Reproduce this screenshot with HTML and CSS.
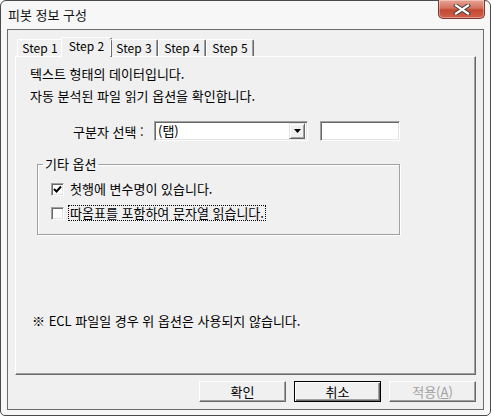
FILE: index.html
```html
<!DOCTYPE html>
<html lang="ko">
<head>
<meta charset="utf-8">
<link rel="stylesheet" href="styles.css">
</head>
<body>
<div class="window">
  <div class="titlebar">
    <span class="title">피봇 정보 구성</span>
    <div class="close">
      <svg width="18" height="11" viewBox="0 0 18 11">
        <path d="M3 1.5 L15 9.5 M15 1.5 L3 9.5" stroke="#3a3a3a" stroke-width="4" stroke-linecap="square"/>
        <path d="M3 1.5 L15 9.5 M15 1.5 L3 9.5" stroke="#ffffff" stroke-width="2.2" stroke-linecap="square"/>
      </svg>
    </div>
  </div>
  <div class="client">
    <div class="tabs">
      <div class="tabrow">
        <div class="tab">Step 1</div>
        <div class="tab active">Step 2</div>
        <div class="tab">Step 3</div>
        <div class="tab">Step 4</div>
        <div class="tab">Step 5</div>
      </div>
      <div class="panel">
        <p class="line l1">텍스트 형태의 데이터입니다.</p>
        <p class="line l2">자동 분석된 파일 읽기 옵션을 확인합니다.</p>
        <div class="seprow">
          <span class="seplabel">구분자 선택 :</span>
          <div class="combo">
            <span class="combotext">(탭)</span>
            <div class="dropbtn">
              <svg width="7" height="4" viewBox="0 0 7 4"><path d="M0 0 H7 L3.5 4 Z" fill="#000"/></svg>
            </div>
          </div>
          <div class="textbox"></div>
        </div>
        <fieldset class="group">
          <legend class="legend">기타 옵션</legend>
          <div class="check">
            <span class="box">
              <svg width="9" height="9" viewBox="0 0 9 9"><path d="M1 4 L3.5 6.5 L8 1.5" stroke="#000" stroke-width="2" fill="none"/></svg>
            </span>
            <span class="ctext">첫행에 변수명이 있습니다.</span>
          </div>
          <div class="check">
            <span class="box"></span>
            <span class="ctext focus">따옴표를 포함하여 문자열 읽습니다.</span>
          </div>
        </fieldset>
        <p class="note">※ ECL 파일일 경우 위 옵션은 사용되지 않습니다.</p>
      </div>
    </div>
    <div class="buttons">
      <div class="btn">확인</div>
      <div class="btn default">취소</div>
      <div class="btn disabled">적용(<u>A</u>)</div>
    </div>
  </div>
</div>
</body>
</html>
```

FILE: styles.css
```css
* { box-sizing: border-box; }
html, body { margin: 0; padding: 0; }
body {
  width: 491px;
  height: 416px;
  background: #ffffff;
  font-family: "Noto Sans CJK KR", "Noto Sans", sans-serif;
  font-size: 13px;
  color: #000;
}
.window {
  width: 491px;
  height: 416px;
  border: 1px solid #4a4a4a;
  border-radius: 6px 6px 5px 5px;
  background: #f7f7f7;
  display: flex;
  flex-direction: column;
  padding: 0 6px 5px 6px;
}
.titlebar {
  height: 28px;
  display: flex;
  align-items: flex-start;
  justify-content: space-between;
}
.title {
  margin-top: 6px;
  margin-left: 1px;
  font-size: 13px;
  line-height: 16px;
  color: #111;
}
.close {
  width: 47px;
  height: 19px;
  margin-top: -1px;
  margin-right: -1px;
  border: 1px solid #7a3a33;
  border-top: none;
  border-radius: 0 0 5px 5px;
  background: linear-gradient(#e8a496 0%, #d4715f 45%, #c24a34 55%, #d0604a 100%);
  box-shadow: inset 0 0 0 1px rgba(255,255,255,0.35);
  display: flex;
  align-items: center;
  justify-content: center;
}
.client {
  flex: 1;
  background: #f0f0f0;
  border: 1px solid #6b6b6b;
  display: flex;
  flex-direction: column;
  padding: 6px 7px 0 7px;
}
.tabs {
  display: flex;
  flex-direction: column;
}
.tabrow {
  display: flex;
  align-items: flex-end;
  height: 20px;
  padding-left: 2px;
  position: relative;
  z-index: 1;
  font-size: 12px;
}
.tab {
  height: 17px;
  padding: 0 3px;
  line-height: 16px;
  border-top: 1px solid #ffffff;
  border-left: 1px solid #ffffff;
  border-right: 1px solid #696969;
  box-shadow: inset -1px 0 #a0a0a0;
  border-radius: 2px 2px 0 0;
  display: flex;
  align-items: center;
  justify-content: center;
  width: 48px;
}
.tab:first-child { width: 46px; }
.tab.active {
  height: 20px;
  width: 51px;
  margin-left: -2px;
  margin-right: -2px;
  margin-bottom: -1px;
  background: #f0f0f0;
  padding-bottom: 3px;
}
.panel {
  height: 319px;
  border-top: 1px solid #ffffff;
  border-left: 1px solid #ffffff;
  border-right: 1px solid #696969;
  border-bottom: 1px solid #696969;
  box-shadow: inset -1px -1px #a0a0a0;
  padding: 8px 0 0 14px;
  display: flex;
  flex-direction: column;
}
.line {
  margin: 0;
  line-height: 18px;
  height: 18px;
  white-space: nowrap;
}
.l2 { margin-top: 4px; }
.seprow {
  display: flex;
  align-items: center;
  margin-top: 16px;
  margin-left: 43px;
  height: 20px;
}
.seplabel { width: 81px; white-space: nowrap; }
.combo {
  width: 154px;
  height: 20px;
  background: #fff;
  border-top: 1px solid #a0a0a0;
  border-left: 1px solid #a0a0a0;
  border-right: 1px solid #fff;
  border-bottom: 1px solid #fff;
  box-shadow: inset 1px 1px #696969, inset -1px -1px #e3e3e3;
  display: flex;
  align-items: center;
  justify-content: space-between;
  padding: 2px 2px 2px 3px;
}
.combotext { line-height: 14px; }
.dropbtn {
  width: 16px;
  height: 16px;
  background: #f0f0f0;
  border-top: 1px solid #e3e3e3;
  border-left: 1px solid #e3e3e3;
  border-right: 1px solid #696969;
  border-bottom: 1px solid #696969;
  box-shadow: inset 1px 1px #fff, inset -1px -1px #a0a0a0;
  display: flex;
  align-items: center;
  justify-content: center;
}
.textbox {
  width: 80px;
  height: 20px;
  margin-left: 12px;
  background: #fff;
  border-top: 1px solid #a0a0a0;
  border-left: 1px solid #a0a0a0;
  border-right: 1px solid #fff;
  border-bottom: 1px solid #fff;
  box-shadow: inset 1px 1px #696969, inset -1px -1px #e3e3e3;
}
.group {
  margin: 15px 0 0 7px;
  width: 363px;
  height: 79px;
  border: 1px solid #a0a0a0;
  box-shadow: inset 1px 1px #fff, 1px 1px #fff;
  padding: 8px 0 0 13px;
  min-width: 0;
}
.legend {
  padding: 0 2px;
  margin-left: -8px;
  line-height: 16px;
}
.check {
  display: flex;
  align-items: center;
  height: 18px;
  margin-bottom: 6px;
}
.box {
  width: 13px;
  height: 13px;
  background: #fff;
  border-top: 1px solid #a0a0a0;
  border-left: 1px solid #a0a0a0;
  border-right: 1px solid #fff;
  border-bottom: 1px solid #fff;
  box-shadow: inset 1px 1px #696969, inset -1px -1px #e3e3e3;
  display: flex;
  align-items: center;
  justify-content: center;
  margin-right: 5px;
  flex: none;
}
.ctext { line-height: 14px; white-space: nowrap; padding: 0 1px; }
.focus { outline: 1px dotted #000; outline-offset: 0; }
.note {
  margin: 77px 0 0 2px;
  line-height: 18px;
  white-space: nowrap;
}
.buttons {
  display: flex;
  justify-content: flex-end;
  gap: 8px;
  margin-top: 6px;
}
.btn {
  width: 87px;
  height: 21px;
  background: #f0f0f0;
  border-top: 1px solid #fff;
  border-left: 1px solid #fff;
  border-right: 1px solid #696969;
  border-bottom: 1px solid #696969;
  box-shadow: inset -1px -1px #a0a0a0;
  display: flex;
  align-items: center;
  justify-content: center;
  line-height: 14px;
}
.btn.default {
  border: 1px solid #000;
  box-shadow: inset 1px 1px #fff, inset -1px -1px #696969, inset -2px -2px #a0a0a0;
}
.btn.disabled { color: #a0a0a0; }
.btn.disabled u { text-decoration: underline; }
```
